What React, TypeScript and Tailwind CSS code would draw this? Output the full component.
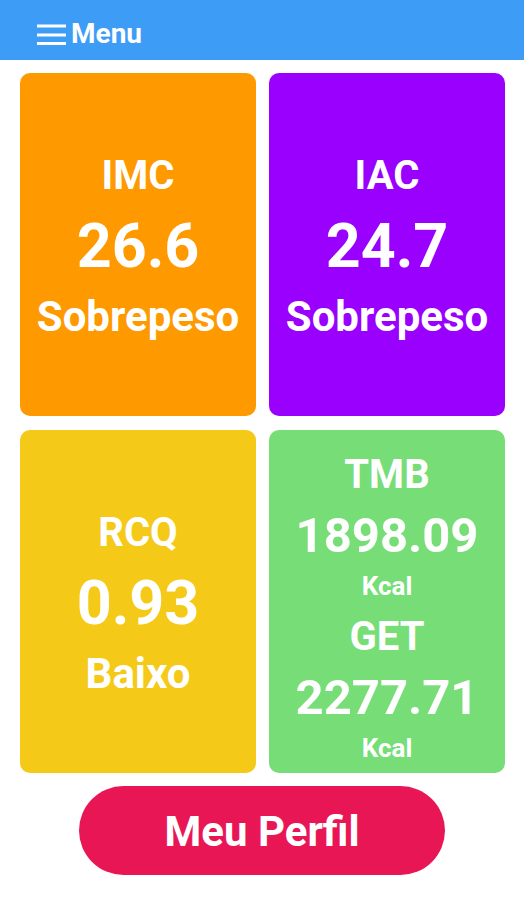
const font = { fontFamily: "Roboto, 'Noto Sans', sans-serif" }

const MenuIcon = () => (
  <svg width="30" height="22" viewBox="0 0 30 22" className="shrink-0">
    <rect x="0" y="1.5" width="29" height="3" fill="white" />
    <rect x="0" y="10.5" width="29" height="3" fill="white" />
    <rect x="0" y="19" width="29" height="3" fill="white" />
  </svg>
)

const StatCard = ({ title, value, status, bg }: { title: string; value: string; status: string; bg: string }) => (
  <div className={`${bg} rounded-[10px] flex flex-col items-center justify-center pt-[3px] text-white font-bold`}>
    <div className="text-[40px] leading-[60px]">{title}</div>
    <div className="text-[61px] leading-[80px]">{value}</div>
    <div className="text-[42px] leading-[61px] whitespace-nowrap">{status}</div>
  </div>
)

export default function App() {
  return (
    <div className="w-[524px] h-[900px] bg-white flex flex-col" style={font}>
      <header className="h-[60px] bg-[#3d9cf6] flex items-center pl-[37px] pt-[8px] gap-[4px]">
        <MenuIcon />
        <span className="text-white font-bold text-[28px] leading-none">Menu</span>
      </header>

      <div className="grid grid-cols-2 grid-rows-[343px_343px] gap-x-[13px] gap-y-[14px] pl-[20px] pr-[19px] pt-[13px]">
        <StatCard title="IMC" value="26.6" status="Sobrepeso" bg="bg-[#fe9900]" />
        <StatCard title="IAC" value="24.7" status="Sobrepeso" bg="bg-[#9a00fe]" />
        <StatCard title="RCQ" value="0.93" status="Baixo" bg="bg-[#f5c918]" />
        <div className="bg-[#77dd77] rounded-[10px] flex flex-col items-center justify-center pt-[8px] text-white font-bold">
          <div className="text-[40px] leading-[61px]">TMB</div>
          <div className="text-[49px] leading-[62px]">1898.09</div>
          <div className="text-[26px] leading-[39px]">Kcal</div>
          <div className="text-[40px] leading-[61px]">GET</div>
          <div className="text-[49px] leading-[62px]">2277.71</div>
          <div className="text-[26px] leading-[39px]">Kcal</div>
        </div>
      </div>

      <div className="flex justify-center pt-[13px]">
        <button className="w-[366px] h-[89px] rounded-full bg-[#e91656] text-white font-bold text-[42px] leading-none pt-[2px]">
          Meu Perfil
        </button>
      </div>
    </div>
  )
}
